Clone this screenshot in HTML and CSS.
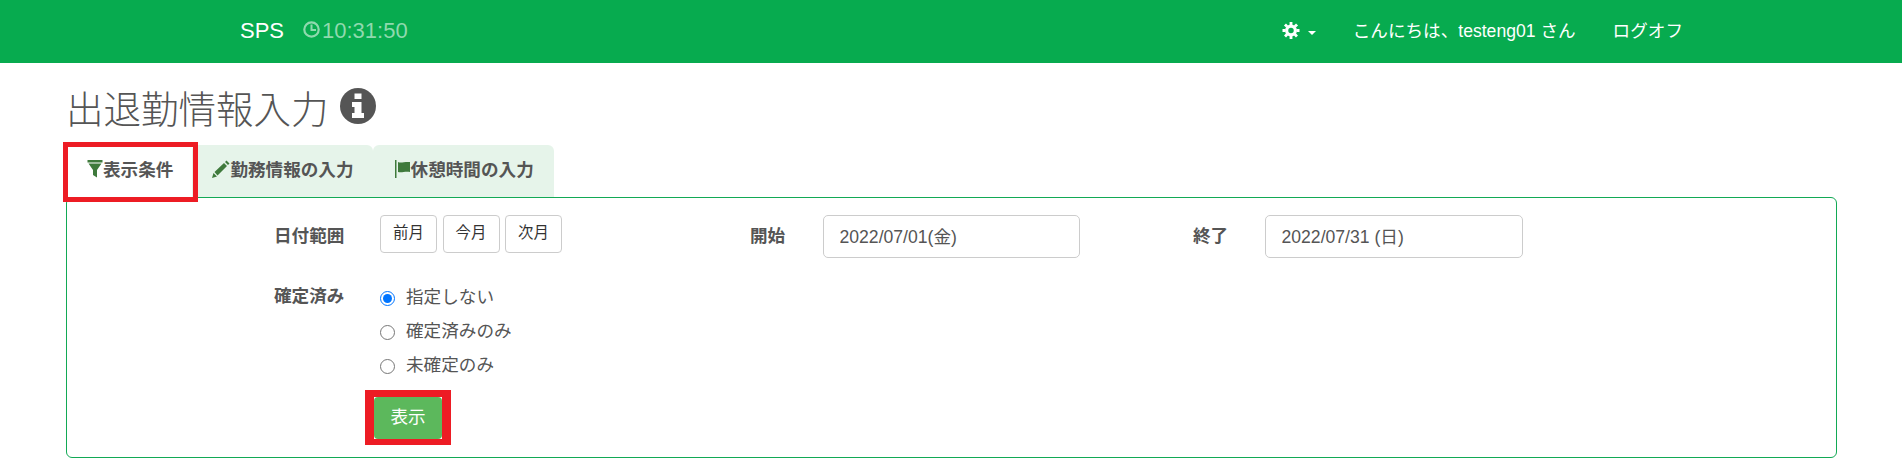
FILE: index.html
```html
<!DOCTYPE html>
<html lang="ja">
<head>
<meta charset="utf-8">
<title>出退勤情報入力</title>
<link rel="stylesheet" href="styles.css">
</head>
<body>
<header class="navbar">
  <a class="brand">SPS</a>
  <span class="clock">
    <svg class="clock-icon" viewBox="0 0 17 17" width="17" height="17"><circle cx="8.5" cy="8.5" r="7.2" fill="none" stroke="currentColor" stroke-width="2.2"/><path d="M8.5 3.500v5.500h4.500" fill="none" stroke="currentColor" stroke-width="2"/></svg>10:31:50
  </span>
  <nav class="nav-right">
    <span class="settings">
      <svg class="gear" viewBox="0 0 18 18" width="18" height="17">
        <circle cx="9" cy="9" r="4.6" fill="none" stroke="#fff" stroke-width="3.4"/>
        <path d="M9 0v18M0 9h18M2.6 2.6l12.8 12.8M15.4 2.6L2.6 15.4" stroke="#fff" stroke-width="3" stroke-dasharray="3.2 11.6 3.2" fill="none"/>
      </svg>
      <span class="caret"></span>
    </span>
    <span class="nav-link">こんにちは、testeng01 さん</span>
    <span class="nav-link">ログオフ</span>
  </nav>
</header>

<main class="content">
  <h1 class="page-title"><span class="title-text">出退勤情報入力</span>
    <svg class="info" viewBox="0 0 36 36" width="36" height="36">
      <circle cx="18" cy="18" r="18" fill="#555"/>
      <path d="M14.5 5.5h7V11h-7zM12 14h9.500v11H24v5H12v-5h2.500v-6H12z" fill="#fff"/>
    </svg>
  </h1>

  <div class="tabs">
    <div class="tab tab-active">
      <svg class="tab-icon" viewBox="0 0 18 18" width="18" height="18"><path d="M2.500 0h15v2.500h-15zM3.500 3.500h13L12 10v7.500l-4-2.500v-5z" fill="#3f7a3c"/></svg>表示条件
      <span class="mark mark-tab"></span>
    </div>
    <div class="tab tab-middle">
      <svg class="tab-icon" viewBox="0 0 18 18" width="18" height="18"><path d="M0 18l1.500-5 3.500 3.500zM2.500 12L12 3l3 3-9.500 9.500zM13 2l1.500-1.500 3 3L16 5z" fill="#3f7a3c"/></svg>勤務情報の入力
    </div>
    <div class="tab">
      <svg class="tab-icon" viewBox="0 0 18 18" width="18" height="18"><path d="M2 0h1.500v18H2zM5 2c3 1.500 6-.5 12 0v10c-5-1-8 1-12 0z" fill="#3f7a3c"/></svg>休憩時間の入力
    </div>
  </div>

  <section class="panel">
    <div class="filter-grid">
      <label class="field-label">日付範囲</label>
      <div class="btn-group">
        <button class="btn" type="button">前月</button>
        <button class="btn" type="button">今月</button>
        <button class="btn" type="button">次月</button>
      </div>
      <label class="field-label">開始</label>
      <input class="date-input" type="text" value="2022/07/01(金)">
      <label class="field-label field-label-end">終了</label>
      <input class="date-input" type="text" value="2022/07/31 (日)">
    </div>
    <div class="confirm-row">
      <label class="field-label">確定済み</label>
      <div class="radios">
        <label class="radio"><input type="radio" name="confirmed" checked>指定しない</label>
        <label class="radio"><input type="radio" name="confirmed">確定済みのみ</label>
        <label class="radio"><input type="radio" name="confirmed">未確定のみ</label>
      </div>
    </div>
    <div class="submit-row">
      <button class="btn-submit" type="button">表示<span class="mark mark-btn"></span></button>
    </div>
  </section>
</main>
</body>
</html>
```
FILE: styles.css
```css
* { box-sizing: border-box; }

body {
  margin: 0;
  background: #fff;
  color: #555;
  font-family: "Liberation Sans", "Noto Sans CJK JP", sans-serif;
  font-size: 17.6px;
  line-height: 26px;
}

.navbar {
  display: flex;
  align-items: center;
  height: 63px;
  padding: 0 219px 2px 240px;
  background: #07ab4f;
  color: #fff;
}

.brand { font-size: 22px; }

.clock {
  display: flex;
  align-items: center;
  margin-left: 19px;
  font-size: 22px;
  color: #8fd9ae;
}

.clock-icon { margin-right: 2px; margin-top: -3px; }

.nav-right {
  display: flex;
  align-items: center;
  gap: 37px;
  margin-left: auto;
}

.settings { display: flex; align-items: center; gap: 8px; }

.gear { margin-top: -1px; }

.caret {
  width: 0;
  height: 0;
  border-left: 4.5px solid transparent;
  border-right: 4.5px solid transparent;
  border-top: 4.5px solid #fff;
  margin-top: 4px;
}

.content { padding: 0 65px 0 66px; }

.page-title {
  display: flex;
  align-items: center;
  gap: 11px;
  height: 82px;
  margin: 0;
  padding-top: 5px;
  font-size: 37.5px;
  font-weight: 300;
  line-height: 44px;
  color: #555;
}

.title-text { position: relative; top: 3px; }

.info { margin-top: -2px; }

.tabs {
  display: flex;
  height: 52px;
  margin-left: -2px;
}

.tab {
  position: relative;
  display: flex;
  align-items: center;
  padding: 0 20px 2px;
  background: #e6f4ea;
  border-radius: 6px 6px 0 0;
  font-weight: 700;
  white-space: nowrap;
}

.tab-active {
  z-index: 1;
  background: #fff;
  padding-left: 21px;
  padding-right: 19px;
}

.tab-middle { padding-right: 19px; }

.tab-icon { flex: none; margin-top: -2px; }

.mark {
  position: absolute;
  border: 5px solid #ed1c24;
  pointer-events: none;
}

.mark-tab { left: -1px; top: -3px; width: 135px; height: 60px; }

.mark-btn { left: -9px; top: -7px; width: 86px; height: 55px; border-width: 7px 9px 6px 9px; }

.panel {
  height: 261px;
  padding: 17px 0 0 207px;
  background: #fff;
  border: 1px solid #12a955;
  border-radius: 6px;
}

.filter-grid {
  display: grid;
  grid-template-columns: 106px 370px 73px 257px 185px 258px;
  align-items: start;
}

.field-label {
  display: block;
  padding-top: 8px;
  font-weight: 700;
  white-space: nowrap;
}

.field-label-end { padding-left: 113px; }

.btn-group { display: flex; gap: 5.5px; }

.btn {
  width: 57px;
  height: 38px;
  padding: 0 0 2px;
  background: #fff;
  border: 1px solid #ccc;
  border-radius: 4px;
  color: #333;
  font: inherit;
  font-size: 15.4px;
}

.date-input {
  width: 100%;
  height: 43px;
  padding: 0 15.5px 2px;
  background: #fff;
  border: 1px solid #ccc;
  border-radius: 5px;
  color: #555;
  font: inherit;
  font-size: 17.6px;
}

.confirm-row {
  display: flex;
  margin-top: 23px;
}

.confirm-row .field-label {
  width: 106px;
  padding-top: 2px;
}

.radios { display: flex; flex-direction: column; }

.radio {
  display: flex;
  align-items: center;
  gap: 11px;
  height: 34px;
  padding-bottom: 2px;
  white-space: nowrap;
}

.radio input {
  width: 15px;
  height: 15px;
  margin: 2px 0 0;
}

.submit-row {
  margin-top: 14px;
  padding-left: 100px;
}

.btn-submit {
  position: relative;
  display: block;
  width: 68px;
  height: 42px;
  padding: 0 0 2px;
  background: #5cb85c;
  border: 0;
  border-radius: 4px;
  color: #fff;
  font: inherit;
}
```
